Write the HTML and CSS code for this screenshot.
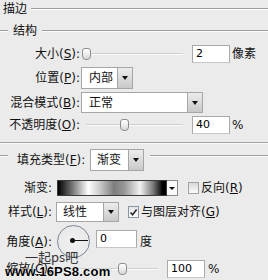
FILE: index.html
```html
<!DOCTYPE html>
<html lang="zh-CN">
<head>
<meta charset="utf-8">
<link rel="stylesheet" href="styles.css">
</head>
<body>
<div class="panel">
  <div class="row title-row">
    <span class="title">描边</span><span class="rule"></span>
  </div>
  <div class="row group-row">
    <span class="tick"></span><span class="group-label">结构</span><span class="rule"></span>
  </div>

  <div class="row row-size">
    <span class="label label-wide">大小(<u>S</u>):</span>
    <div class="slider"><span class="track"></span><span class="thumb" style="left:0px"></span></div>
    <span class="field">2</span>
    <span class="unit">像素</span>
  </div>

  <div class="row row-pos">
    <span class="label label-wide">位置(<u>P</u>):</span>
    <div class="select select-pos"><span class="select-text">内部</span><span class="select-btn"><span class="tri"></span></span></div>
  </div>

  <div class="row row-blend">
    <span class="label label-wide">混合模式(<u>B</u>):</span>
    <div class="select select-blend"><span class="select-text">正常</span><span class="select-btn"><span class="tri"></span></span></div>
  </div>

  <div class="row row-opacity">
    <span class="label label-wide">不透明度(<u>O</u>):</span>
    <div class="slider"><span class="track"></span><span class="thumb" style="left:38px"></span></div>
    <span class="field">40</span>
    <span class="unit">%</span>
  </div>

  <div class="divider"></div>

  <div class="row row-fill">
    <span class="tick tick-fill"></span>
    <span class="label label-fill">填充类型(<u>F</u>):</span>
    <div class="select select-fill"><span class="select-text">渐变</span><span class="select-btn"><span class="tri"></span></span></div>
    <span class="rule rule-fill"></span>
  </div>

  <div class="row row-grad">
    <span class="label label-narrow">渐变:</span>
    <div class="grad-picker">
      <span class="grad-swatch"></span><span class="grad-btn"><span class="tri"></span></span>
    </div>
    <span class="check check-reverse"></span>
    <span class="check-text">反向(<u>R</u>)</span>
  </div>

  <div class="row row-style">
    <span class="label label-narrow">样式(<u>L</u>):</span>
    <div class="select select-style"><span class="select-text">线性</span><span class="select-btn"><span class="tri"></span></span></div>
    <span class="check check-align">
      <svg width="9" height="9" viewBox="0 0 9 9"><path d="M1.5 4.5 L3.6 6.8 L7.6 1.6" fill="none" stroke="#2b2b2b" stroke-width="1.6"/></svg>
    </span>
    <span class="check-text">与图层对齐(<u>G</u>)</span>
  </div>

  <div class="row row-angle">
    <span class="label label-narrow">角度(<u>A</u>):</span>
    <div class="dial"><span class="dial-dot"></span><span class="dial-hand"></span></div>
    <span class="field field-angle">0</span>
    <span class="unit">度</span>
  </div>

  <div class="row row-scale">
    <span class="label label-narrow">缩放(<u>C</u>):</span>
    <div class="slider"><span class="track"></span><span class="thumb" style="left:61px"></span></div>
    <span class="field">100</span>
    <span class="unit unit-pct">%</span>
  </div>

  <span class="wm wm-cn">一起ps吧</span>
  <span class="wm wm-url">www.16PS8.com</span>
</div>
</body>
</html>
```

FILE: styles.css
```css
* { box-sizing: border-box; }
html, body { margin: 0; padding: 0; }
body {
  background: #ebebeb;
  width: 268px;
  height: 280px;
  overflow: hidden;
  font-family: "DejaVu Sans", "Noto Sans CJK SC", sans-serif;
  font-size: 12px;
  color: #111;
}
u { text-decoration: underline; text-underline-offset: 1px; }

.panel {
  position: relative;
  display: flex;
  flex-direction: column;
  width: 268px;
  height: 280px;
}
.row {
  display: flex;
  align-items: center;
  flex: none;
  line-height: 16px;
  white-space: nowrap;
}

.rule {
  flex: 1;
  height: 2px;
  border-top: 1px solid #9e9e9e;
  border-bottom: 1px solid #fbfbfb;
}
.tick {
  width: 8px;
  height: 2px;
  border-top: 1px solid #9e9e9e;
  border-bottom: 1px solid #fbfbfb;
  flex: none;
}

.title-row { height: 18px; }
.title { padding-left: 3px; font-size: 12px; }
.title-row .rule { margin-left: 4px; }

.group-row { height: 16px; margin-top: 5px; }
.group-label { margin-left: 5px; }
.group-row .rule { margin-left: 5px; }

.row-size { height: 18px; margin-top: 6px; }
.row-pos { height: 22px; margin-top: 4px; }
.row-blend { height: 21px; margin-top: 3px; }
.row-opacity { height: 19px; margin-top: 2px; }
.row-fill { height: 22px; margin-top: 5px; }
.row-grad { height: 16px; margin-top: 9px; }
.row-style { height: 20px; margin-top: 6px; }
.row-angle { height: 33px; margin-top: 3px; }
.row-scale { height: 18px; margin-top: 2px; }

.divider {
  flex: none;
  margin-top: 8px;
  height: 2px;
  border-top: 1px solid #a2a2a2;
  border-bottom: 1px solid #fbfbfb;
}

.label { flex: none; text-align: right; }
.label-wide { width: 80px; }
.label-narrow { width: 52px; }
.label-fill { width: 70px; margin-left: 9px; text-align: left; }

/* slider */
.slider {
  position: relative;
  flex: none;
  width: 105px;
  height: 14px;
  margin-left: 2px;
}
.row-scale .slider { margin-left: 5px; }
.track {
  position: absolute;
  left: 4px;
  right: 4px;
  top: 6px;
  height: 2px;
  background: #cfcfcf;
  border-bottom: 1px solid #fafafa;
}
.thumb {
  position: absolute;
  top: 1px;
  width: 9px;
  height: 12px;
  border: 1px solid #8c8c8c;
  border-radius: 3px 3px 4px 4px;
  background: linear-gradient(#ffffff, #d9d9d9);
}

/* text field */
.field {
  flex: none;
  width: 38px;
  height: 18px;
  margin-left: 5px;
  padding-left: 3px;
  background: #fff;
  border: 1px solid #a9a9a9;
  border-bottom-color: #c8c8c8;
  font-size: 11px;
  line-height: 16px;
  color: #000;
}
.unit { margin-left: 2px; }
.unit-pct { margin-left: 3px; }

/* dropdown */
.select {
  display: flex;
  flex: none;
  height: 100%;
  margin-left: 1px;
  border: 1px solid #a6a6a6;
  background: #fff;
}
.select-text { flex: 1; padding-left: 7px; line-height: 20px; }
.select-btn {
  flex: none;
  width: 15px;
  display: flex;
  align-items: center;
  justify-content: center;
  border-left: 1px solid #a6a6a6;
  background: linear-gradient(#ececec, #c9c9c9);
}
.tri {
  width: 0;
  height: 0;
  border-left: 3.5px solid transparent;
  border-right: 3.5px solid transparent;
  border-top: 4px solid #111;
}
.select-pos { width: 52px; }
.select-blend { width: 122px; }
.select-fill { width: 54px; margin-left: 3px; }
.select-fill .select-text { padding-left: 6px; }
.select-style { width: 63px; margin-left: 4px; }
.select-style .select-text { padding-left: 6px; line-height: 18px; }

.rule-fill { align-self: flex-start; margin-top: 6px; margin-left: 6px; }
.tick-fill { align-self: flex-start; margin-top: 6px; }

/* gradient picker */
.grad-picker { display: flex; flex: none; height: 16px; margin-left: 5px; }
.grad-swatch {
  width: 110px;
  height: 16px;
  border: 1px solid #3a3a3a;
  background: linear-gradient(to right, #000 0%, #6a6a6a 12%, #fff 28%, #c4c4c4 40%, #7c7c7c 52%, #9a9a9a 62%, #f2f2f2 76%, #7a7a7a 88%, #000 97%);
}
.grad-btn {
  width: 11px;
  height: 16px;
  display: flex;
  align-items: center;
  justify-content: center;
  border: 1px solid #8a8a8a;
  border-left: none;
  background: #fafafa;
}
.grad-btn .tri { border-left-width: 3px; border-right-width: 3px; border-top-width: 3px; }

/* checkbox */
.check {
  flex: none;
  width: 11px;
  height: 12px;
  display: flex;
  align-items: center;
  justify-content: center;
  border: 1px solid #a3a3a3;
  background: linear-gradient(#d8d8d8, #fbfbfb);
}
.check-reverse { margin-left: 10px; }
.check-align { margin-left: 9px; border-color: #8b97a6; background: linear-gradient(#e4e4e4, #fdfdfd); }
.check-text { margin-left: 2px; }

/* angle dial */
.dial {
  position: relative;
  flex: none;
  width: 33px;
  height: 33px;
  margin-left: 5px;
  border: 1.5px solid #7b8596;
  border-radius: 50%;
  background: radial-gradient(circle, #f1f1f1 0%, #e9e9e9 70%, #dcdee2 100%);
}
.dial-dot {
  position: absolute;
  left: 12px;
  top: 12px;
  width: 5px;
  height: 5px;
  border-radius: 50%;
  background: #111;
}
.dial-hand {
  position: absolute;
  left: 14px;
  top: 14px;
  width: 16px;
  height: 1px;
  background: #111;
}
.field-angle { width: 41px; margin-left: 6px; align-self: flex-start; margin-top: 5px; }
.row-angle .unit { margin-left: 3px; }

/* watermarks */
.wm { position: absolute; white-space: nowrap; }
.wm-cn {
  left: 25px;
  top: 249px;
  font-family: "Noto Sans CJK SC", sans-serif;
  font-size: 13px;
  line-height: 16px;
  color: #333;
}
.wm-url {
  left: 5px;
  top: 264px;
  font-family: "Liberation Sans", sans-serif;
  font-weight: bold;
  font-size: 13px;
  line-height: 15px;
  letter-spacing: 0.2px;
  color: #000;
  text-shadow: 0 0 1px #fff, 0 0 1px #fff;
}
```
